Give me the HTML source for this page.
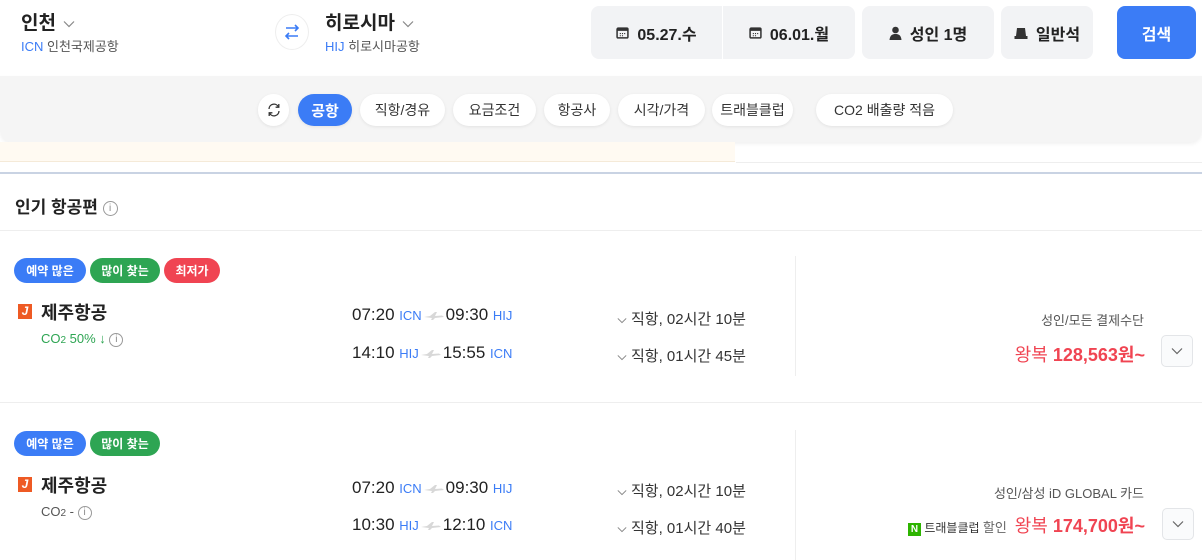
<!DOCTYPE html>
<html><head><meta charset="utf-8"><style>
*{margin:0;padding:0;box-sizing:border-box}
body{width:1202px;height:560px;overflow:hidden;background:#fff;font-family:"Liberation Sans","Noto Sans CJK KR",sans-serif;color:#222;position:relative}
.a{position:absolute;white-space:nowrap}
.city{font-size:19px;font-weight:bold}
.sub{font-size:13px;color:#555}
.blue{color:#3b7cf6}
.box{position:absolute;top:6px;height:53px;background:#f2f3f5;border-radius:8px;font-size:16px;font-weight:bold;display:flex;align-items:center;justify-content:center;gap:8px}
.chip{position:absolute;top:94px;height:32px;border-radius:16px;background:#fff;font-size:14px;color:#333;display:flex;align-items:center;justify-content:center;box-shadow:0 1px 3px rgba(0,0,0,.08)}
.badge{position:absolute;height:25px;border-radius:13px;color:#fff;font-size:12px;font-weight:bold;display:flex;align-items:center;justify-content:center}
.time{font-size:17px}
.code{font-size:13px;color:#3b7cf6}
.dur{font-size:15px;color:#333}
.price{font-size:18px;color:#f04452}
.exp{position:absolute;width:32px;height:32px;border:1px solid #e3e5e8;border-radius:5px;background:#fafbfc;display:flex;align-items:center;justify-content:center}
.logo{position:absolute;width:14px;height:15px;background:#ee5a24;color:#fff;font-size:12px;font-style:italic;font-weight:bold;text-align:center;line-height:15px}
.pl{display:inline-block;width:20px;height:8px;vertical-align:middle;margin:0 2px}
</style></head><body>
<svg width="0" height="0" style="position:absolute"><defs>
<symbol id="chev" viewBox="0 0 12 8"><path d="M1 1.5L6 6.5L11 1.5" fill="none" stroke="currentColor" stroke-width="1.2"/></symbol>
<symbol id="cal" viewBox="0 0 12 12"><rect x="1" y="2" width="10" height="9" rx="1" fill="none" stroke="#333" stroke-width="1.4"/><rect x="1" y="2" width="10" height="2.5" fill="#333"/><path d="M3.5 7h1M5.5 7h1M7.5 7h1M3.5 9h1M5.5 9h1" stroke="#333"/></symbol>
<symbol id="pl" viewBox="0 0 20 8"><path d="M0 5L6 4L11 0L13 0L11 4L18 3.5L20 5L11 6L9 8L7 8L8 6L0 5Z" fill="#d8d8d8"/></symbol>
</defs></svg>
<div class="a city" style="left:21px;top:8px">인천 <svg width="12" height="8" style="color:#888;vertical-align:middle;margin-left:2px"><use href="#chev"/></svg></div>
<div class="a sub" style="left:21px;top:36px"><span class="blue">ICN</span> 인천국제공항</div>
<div class="a" style="left:275px;top:14px;width:34px;height:36px;border:1px solid #eee;border-radius:50%"><svg width="34" height="34" viewBox="0 0 34 34" style="position:absolute;left:-1px;top:0"><path d="M11 13h12M20 10l3 3-3 3M23 21H11M14 18l-3 3 3 3" fill="none" stroke="#3b7cf6" stroke-width="1.6"/></svg></div>
<div class="a city" style="left:325px;top:8px">히로시마 <svg width="12" height="8" style="color:#888;vertical-align:middle;margin-left:2px"><use href="#chev"/></svg></div>
<div class="a sub" style="left:325px;top:36px"><span class="blue">HIJ</span> 히로시마공항</div>
<div class="box" style="left:591px;width:131px;border-radius:8px 0 0 8px"><svg width="13" height="13"><use href="#cal"/></svg>05.27.수</div>
<div class="box" style="left:723px;width:132px;border-radius:0 8px 8px 0"><svg width="13" height="13"><use href="#cal"/></svg>06.01.월</div>
<div class="box" style="left:862px;width:132px"><svg width="13" height="14" viewBox="0 0 13 14"><circle cx="6.5" cy="4" r="3.3" fill="#333"/><path d="M0.5 14C1 9 3.5 8 6.5 8S12 9 12.5 14Z" fill="#333"/></svg>성인 1명</div>
<div class="box" style="left:1001px;width:92px"><svg width="14" height="12" viewBox="0 0 14 12"><path d="M3 1h8l1 8H2Z" fill="#333"/><rect x="0.5" y="9" width="13" height="3" fill="#333"/></svg>일반석</div>
<div class="box" style="left:1117px;width:79px;background:#3b7cf6;color:#fff">검색</div>
<div class="a" style="left:0;top:76px;width:1202px;height:66px;background:#f5f5f5;border-radius:0 0 12px 12px;box-shadow:0 2px 4px rgba(0,0,0,.06)"></div>
<div class="a" style="left:0;top:142px;width:735px;height:20px;background:#fffaf2;border-bottom:1px solid #f5ead8"></div>
<div class="a" style="left:736px;top:162px;width:466px;height:1px;background:#eee"></div>
<div class="a" style="left:0;top:172px;width:1202px;height:2px;background:#c9d3e3"></div>
<div class="chip" style="left:258px;width:31px"><svg width="16" height="16" viewBox="0 0 16 16"><path d="M3 7A5 5 0 0 1 12.5 5M13 9A5 5 0 0 1 3.5 11" fill="none" stroke="#333" stroke-width="1.3"/><path d="M12.8 2v3.2H9.6M3.2 14v-3.2h3.2" fill="none" stroke="#333" stroke-width="1.3"/></svg></div>
<div class="chip" style="left:298px;width:54px;background:#3b7cf6;color:#fff;font-weight:bold;font-size:15px">공항</div>
<div class="chip" style="left:360px;width:85px">직항/경유</div>
<div class="chip" style="left:453px;width:83px">요금조건</div>
<div class="chip" style="left:544px;width:66px">항공사</div>
<div class="chip" style="left:618px;width:87px">시각/가격</div>
<div class="chip" style="left:712px;width:81px">트래블클럽</div>
<div class="chip" style="left:816px;width:137px">CO2 배출량 적음</div>
<div class="a" style="left:15px;top:193px;font-size:17px;font-weight:bold">인기 항공편 <span style="display:inline-block;width:15px;height:15px;border:1px solid #999;border-radius:50%;font-size:10px;color:#888;text-align:center;line-height:13px;font-weight:normal;vertical-align:middle">i</span></div>
<div class="a" style="left:0;top:230px;width:1202px;height:1px;background:#eee"></div>
<div class="a" style="left:0;top:402px;width:1202px;height:1px;background:#eee"></div>
<div class="a" style="left:795px;top:256px;width:1px;height:120px;background:#eee"></div>
<div class="a" style="left:795px;top:430px;width:1px;height:130px;background:#eee"></div>
<!-- card1 -->
<div class="badge" style="left:14px;top:258px;width:72px;background:#3b7cf6">예약 많은</div>
<div class="badge" style="left:90px;top:258px;width:70px;background:#2ea553">많이 찾는</div>
<div class="badge" style="left:164px;top:258px;width:56px;background:#f04452">최저가</div>
<div class="logo" style="left:18px;top:304px">J</div>
<div class="a" style="left:41px;top:299px;font-size:18px;font-weight:bold">제주항공</div>
<div class="a" style="left:41px;top:331px;font-size:13px;color:#2ea553">CO<span style="font-size:10px">2</span> 50% ↓ <span style="display:inline-block;width:14px;height:14px;border:1px solid #999;border-radius:50%;font-size:10px;color:#888;text-align:center;line-height:12px;vertical-align:middle">i</span></div>
<div class="a time" style="left:352px;top:305px">07:20 <span class="code">ICN</span><svg class="pl"><use href="#pl"/></svg>09:30 <span class="code">HIJ</span></div>
<div class="a time" style="left:352px;top:343px">14:10 <span class="code">HIJ</span><svg class="pl"><use href="#pl"/></svg>15:55 <span class="code">ICN</span></div>
<div class="a dur" style="left:617px;top:308px"><svg width="10" height="7" style="color:#888;vertical-align:middle;margin-right:4px"><use href="#chev"/></svg>직항, 02시간 10분</div>
<div class="a dur" style="left:617px;top:345px"><svg width="10" height="7" style="color:#888;vertical-align:middle;margin-right:4px"><use href="#chev"/></svg>직항, 01시간 45분</div>
<div class="a" style="right:58px;top:310px;font-size:13px;color:#555">성인/모든 결제수단</div>
<div class="a price" style="right:57px;top:341px">왕복 <b>128,563원~</b></div>
<div class="exp" style="left:1161px;top:335px;color:#666"><svg width="12" height="8"><use href="#chev"/></svg></div>
<!-- card2 -->
<div class="badge" style="left:14px;top:431px;width:72px;background:#3b7cf6">예약 많은</div>
<div class="badge" style="left:90px;top:431px;width:70px;background:#2ea553">많이 찾는</div>
<div class="logo" style="left:18px;top:477px">J</div>
<div class="a" style="left:41px;top:472px;font-size:18px;font-weight:bold">제주항공</div>
<div class="a" style="left:41px;top:504px;font-size:13px;color:#555">CO<span style="font-size:10px">2</span> - <span style="display:inline-block;width:14px;height:14px;border:1px solid #999;border-radius:50%;font-size:10px;color:#888;text-align:center;line-height:12px;vertical-align:middle">i</span></div>
<div class="a time" style="left:352px;top:478px">07:20 <span class="code">ICN</span><svg class="pl"><use href="#pl"/></svg>09:30 <span class="code">HIJ</span></div>
<div class="a time" style="left:352px;top:515px">10:30 <span class="code">HIJ</span><svg class="pl"><use href="#pl"/></svg>12:10 <span class="code">ICN</span></div>
<div class="a dur" style="left:617px;top:480px"><svg width="10" height="7" style="color:#888;vertical-align:middle;margin-right:4px"><use href="#chev"/></svg>직항, 02시간 10분</div>
<div class="a dur" style="left:617px;top:517px"><svg width="10" height="7" style="color:#888;vertical-align:middle;margin-right:4px"><use href="#chev"/></svg>직항, 01시간 40분</div>
<div class="a" style="right:58px;top:483px;font-size:13px;color:#555">성인/삼성 iD GLOBAL 카드</div>
<div class="a" style="left:908px;top:517px;font-size:12px;color:#333"><span style="display:inline-block;width:13px;height:13px;background:#2db400;color:#fff;font-size:10px;font-weight:bold;text-align:center;line-height:13px">N</span> 트래블클럽 <span style="font-size:13px;color:#666">할인</span></div>
<div class="a price" style="right:57px;top:512px">왕복 <b>174,700원~</b></div>
<div class="exp" style="left:1162px;top:508px;color:#666"><svg width="12" height="8"><use href="#chev"/></svg></div>
</body></html>
